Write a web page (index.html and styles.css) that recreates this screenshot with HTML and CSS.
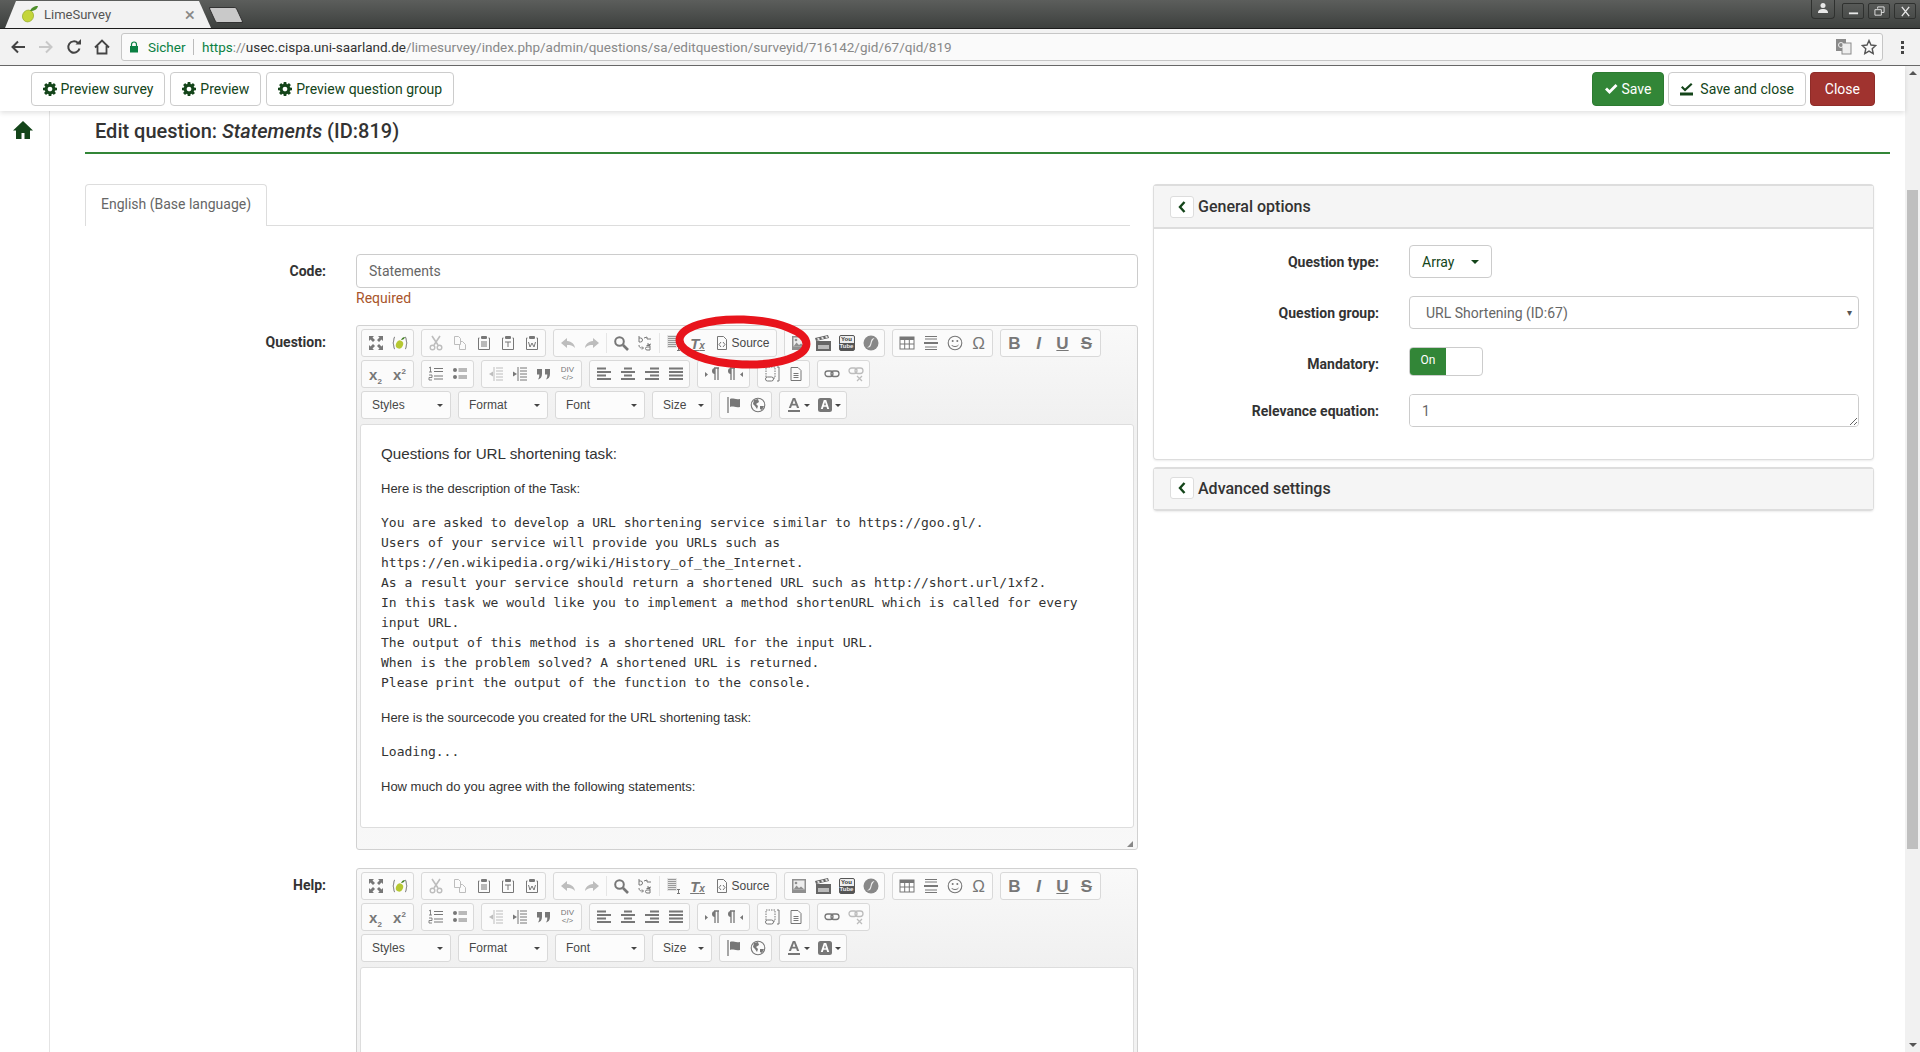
FILE: index.html
```html
<!DOCTYPE html>
<html lang="en">

<head>
    <meta charset="UTF-8">
    <title>LimeSurvey</title>
    <link rel="stylesheet" href="styles.css">
</head>

<body>
    <svg class="sprites" xmlns="http://www.w3.org/2000/svg">
        <symbol id="i-cog" viewBox="0 0 1536 1536"><path d="M1024 768q0-106-75-181t-181-75-181 75-75 181 75 181 181 75 181-75 75-181zm512-109v222q0 12-8 23t-20 13l-185 28q-19 54-39 91 35 50 107 138 10 12 10 25t-9 23q-27 37-99 108t-94 71q-12 0-26-9l-138-108q-44 23-91 38-16 136-29 186-7 28-36 28h-222q-14 0-24.500-8.500t-11.500-21.500l-28-184q-49-16-90-37l-141 107q-10 9-25 9-14 0-25-11-126-114-165-168-7-10-7-23 0-12 8-23 15-21 51-66.500t54-70.500q-27-50-41-99l-183-27q-13-2-21-12.500t-8-23.500v-222q0-12 8-23t19-13l186-28q14-46 39-92-40-57-107-138-10-12-10-24 0-10 9-23 26-36 98.500-107.500t94.500-71.500q13 0 26 10l138 107q44-23 91-38 16-136 29-186 7-28 36-28h222q14 0 24.500 8.500t11.500 21.500l28 184q49 16 90 37l142-107q9-9 24-9 13 0 25 10 129 119 165 170 7 8 7 22 0 12-8 23-15 21-51 66.500t-54 70.500q26 50 41 98l183 28q13 2 21 12.500t8 23.500z"/></symbol>
        <symbol id="i-lime" viewBox="0 0 16 16"><path d="M3 2C1.500 2 2 7 1 8c1 1 .5 6 2 6" fill="none" stroke="#666" stroke-width="1"/><path d="M13 2c1.500 0 1 5 2 6-1 1-.5 6-2 6" fill="none" stroke="#666" stroke-width="1"/><ellipse cx="7.500" cy="9.500" rx="3.500" ry="4.200" fill="#b6c832" transform="rotate(25 7.500 9.500)"/><path d="M9 5c1-2 2-3 4-3-.5 2-2 3-4 3z" fill="#3f7d1f"/></symbol>
        <symbol id="i-maximize" viewBox="0 0 16 16"><path d="M1 1h5L4.500 2.500 7 5 5 7 2.500 4.500 1 6zM15 1v5l-1.500-1.500L11 7 9 5l2.500-2.500L10 1zM1 15v-5l1.500 1.500L5 9l2 2-2.500 2.500L6 15zM15 15h-5l1.500-1.500L9 11l2-2 2.500 2.500L15 10z"/></symbol>
        <symbol id="i-cut" viewBox="0 0 16 16"><path d="M4 1l6 9M12 1l-6 9" fill="none" stroke="currentColor" stroke-width="1.600"/><circle cx="4.500" cy="12.500" r="2.300" fill="none" stroke="currentColor" stroke-width="1.400"/><circle cx="11.500" cy="12.500" r="2.300" fill="none" stroke="currentColor" stroke-width="1.400"/></symbol>
        <symbol id="i-copy" viewBox="0 0 16 16"><path d="M2.500 1.500h4l2 2v6h-6zM8.500 6.500h2l3 3v5h-6v-5" fill="none" stroke="currentColor"/></symbol>
        <symbol id="i-paste" viewBox="0 0 16 16"><path d="M3.500 3H2.500v11.500h11V3h-1" fill="none" stroke="currentColor"/><rect x="5" y="1" width="6" height="3" rx="1"/><path d="M5 7h6M5 9h6M5 11h6" stroke="currentColor"/></symbol>
        <symbol id="i-pastetext" viewBox="0 0 16 16"><path d="M3.500 3H2.500v11.500h11V3h-1" fill="none" stroke="currentColor"/><rect x="5" y="1" width="6" height="3" rx="1"/><path d="M5 7h6M8 7v5" stroke="currentColor"/></symbol>
        <symbol id="i-pasteword" viewBox="0 0 16 16"><path d="M3.500 3H2.500v11.500h11V3h-1" fill="none" stroke="currentColor"/><rect x="5" y="1" width="6" height="3" rx="1"/><path d="M4.500 7l1.500 5 2-4 2 4 1.500-5" fill="none" stroke="currentColor"/></symbol>
        <symbol id="i-undo" viewBox="0 0 16 16"><path d="M7 3L1 8l6 5v-3c3 0 6 .5 8 3-.5-4-3-6.500-8-7z"/></symbol>
        <symbol id="i-redo" viewBox="0 0 16 16"><path d="M9 3l6 5-6 5v-3c-3 0-6 .5-8 3 .5-4 3-6.500 8-7z"/></symbol>
        <symbol id="i-find" viewBox="0 0 16 16"><circle cx="6.500" cy="6.500" r="4.300" fill="none" stroke="currentColor" stroke-width="2"/><path d="M10 10l5 5" stroke="currentColor" stroke-width="2.600"/></symbol>
        <symbol id="i-replace" viewBox="0 0 16 16"><path d="M2 1v6h1.500a2 2 0 0 0 0-4H2M7 3l3-1v2l4 0M14 9l-3 1V8" fill="none" stroke="currentColor"/><path d="M2 10c0 3 2 3 4 3M5 11.500L6.500 13 5 14.500" fill="none" stroke="currentColor"/><path d="M9.500 10.500h3.500v4.500h-3a1.500 1.500 0 0 1 0-3h3" fill="none" stroke="currentColor"/></symbol>
        <symbol id="i-selectall" viewBox="0 0 16 16"><rect x="1" y="0" width="10" height="13" fill="#e4e4e4"/><path d="M2 1.500h8M2 3.500h8M2 5.500h8M2 7.500h8M2 9.500h8M2 11.500h8" stroke="#9a9a9a"/><path d="M12.500 11v5M11 11.500h3M11 15.500h3" stroke="#777"/></symbol>
        <symbol id="i-source" viewBox="0 0 16 16"><path d="M3.500 1.500h6l3 3v10h-9z" fill="none" stroke="currentColor"/><path d="M7 7L5 9.500 7 12M9 7l2 2.500L9 12" fill="none" stroke="currentColor"/></symbol>
        <symbol id="i-image" viewBox="0 0 16 16"><rect x="1" y="1" width="14" height="14" fill="#8f8f8f"/><rect x="2.500" y="2.500" width="11" height="9" fill="#ededed"/><path d="M2.500 11.500l3-4 2.500 2.500 2-1.500 3.500 3z" fill="#8f8f8f"/><circle cx="5" cy="5" r="1.300" fill="#8f8f8f"/></symbol>
        <symbol id="i-video" viewBox="0 0 16 16"><path d="M1 6h15v10H1z" fill="#666"/><path d="M0 3l13-3 1 3L1 6z" fill="#666"/><path d="M2 3.500l2-.5 1 1.500-2 .5zM6 2.500l2-.5 1 1.500-2 .5zM10 1.500l2-.5 1 1.500-2 .5z" fill="#eee"/><path d="M3 10h11v4H3z" fill="#bbb"/></symbol>
        <symbol id="i-flash" viewBox="0 0 16 16"><circle cx="8" cy="8" r="7.500" fill="#888"/><path d="M11.500 3C8 3.500 8 6 7.500 8S6 12 4 12.500c3 .5 4-1.500 4.500-4S10 4.500 11.500 3z" fill="#eee"/></symbol>
        <symbol id="i-table" viewBox="0 0 16 16"><rect x="1" y="2" width="14" height="12" fill="#fff" stroke="#777"/><rect x="1" y="2" width="14" height="3" fill="#777"/><path d="M1 9h14M5.700 5v9M10.300 5v9" stroke="#777"/></symbol>
        <symbol id="i-hr" viewBox="0 0 16 16"><path d="M2 1.500h12M2 4h12M2 12h12M2 14.500h12" stroke="currentColor"/><path d="M1 8h14" stroke="currentColor" stroke-width="2"/></symbol>
        <symbol id="i-smiley" viewBox="0 0 16 16"><circle cx="8" cy="8" r="6.800" fill="none" stroke="currentColor" stroke-width="1.100"/><circle cx="5.700" cy="6" r="1"/><circle cx="10.300" cy="6" r="1"/><path d="M4.500 10c1.500 2 5.500 2 7 0" fill="none" stroke="currentColor"/></symbol>
        <symbol id="i-numlist" viewBox="0 0 16 16"><path d="M1 2l1.500-1v5M1 6h3M1 9h3v2.500H1V14h3" fill="none" stroke="currentColor" stroke-width=".9"/><path d="M6 2.500h9M6 5.500h9M6 10h9M6 13h9" stroke="currentColor"/></symbol>
        <symbol id="i-bullist" viewBox="0 0 16 16"><circle cx="3" cy="4" r="2"/><circle cx="3" cy="11" r="2"/><path d="M6.500 3h8.500M6.500 5h8.500M6.500 10h8.500M6.500 12h8.500" stroke="currentColor"/></symbol>
        <symbol id="i-outdent" viewBox="0 0 16 16"><path d="M8 2h7M8 5h7M8 8h7M8 11h7M8 14h7M6 1v14" stroke="currentColor" stroke-dasharray="none"/><path d="M5 5.500L1 8l4 2.500z"/></symbol>
        <symbol id="i-indent" viewBox="0 0 16 16"><path d="M8 2h7M8 5h7M8 8h7M8 11h7M8 14h7M6 1v14" stroke="currentColor"/><path d="M1 5.500L5 8l-4 2.500z"/></symbol>
        <symbol id="i-quote" viewBox="0 0 16 16"><path d="M1 3h5v5c0 3-1.500 5-4 5.500.8-1.500 1.300-2.500 1.300-5H1zM9 3h5v5c0 3-1.500 5-4 5.500.8-1.500 1.300-2.500 1.300-5H9z"/></symbol>
        <symbol id="i-alignl" viewBox="0 0 16 16"><path d="M1 2.500h9M1 6h14M1 9.500h9M1 13h14" stroke="currentColor" stroke-width="2"/></symbol>
        <symbol id="i-alignc" viewBox="0 0 16 16"><path d="M4 2.500h8M1 6h14M4 9.500h8M1 13h14" stroke="currentColor" stroke-width="2"/></symbol>
        <symbol id="i-alignr" viewBox="0 0 16 16"><path d="M6 2.500h9M1 6h14M6 9.500h9M1 13h14" stroke="currentColor" stroke-width="2"/></symbol>
        <symbol id="i-alignj" viewBox="0 0 16 16"><path d="M1 2.500h14M1 6h14M1 9.500h14M1 13h14" stroke="currentColor" stroke-width="2"/></symbol>
        <symbol id="i-ltr" viewBox="0 0 16 16"><path d="M1 6l3 2.500L1 11z"/><path d="M10 2h5M11 2v12M14 2v12" stroke="currentColor" stroke-width="1.300" fill="none"/><path d="M11 2a3 3 0 0 0 0 6z"/></symbol>
        <symbol id="i-rtl" viewBox="0 0 16 16"><path d="M15 6l-3 2.500 3 2.500z"/><path d="M2 2h5M3 2v12M6 2v12" stroke="currentColor" stroke-width="1.300" fill="none"/><path d="M3 2a3 3 0 0 0 0 6z"/></symbol>
        <symbol id="i-iframe" viewBox="0 0 16 16"><path d="M2 1h9v11H2z" fill="none" stroke="currentColor" stroke-dasharray="1.500 1"/><rect x="1.500" y="11" width="8" height="4" rx="2" fill="#fff" stroke="currentColor"/><path d="M13 1h2v14h-2" fill="none" stroke="currentColor"/></symbol>
        <symbol id="i-page" viewBox="0 0 16 16"><path d="M3 1.500h7l3 3v10H3z" fill="none" stroke="currentColor"/><path d="M5.500 7.500h5M5.500 9.500h5M5.500 11.500h5" stroke="currentColor"/></symbol>
        <symbol id="i-link" viewBox="0 0 16 16"><rect x="1" y="5" width="8" height="5.500" rx="2.700" fill="none" stroke="currentColor" stroke-width="1.300"/><rect x="7" y="5" width="8" height="5.500" rx="2.700" fill="none" stroke="currentColor" stroke-width="1.300"/></symbol>
        <symbol id="i-unlink" viewBox="0 0 16 16"><rect x="1" y="2" width="8" height="5.500" rx="2.700" fill="none" stroke="currentColor" stroke-width="1.300"/><rect x="7" y="2" width="8" height="5.500" rx="2.700" fill="none" stroke="currentColor" stroke-width="1.300"/><path d="M9 10l5 5M14 10l-5 5" stroke="currentColor" stroke-width="1.300"/></symbol>
        <symbol id="i-flag" viewBox="0 0 16 16"><path d="M2 0v16" stroke="currentColor" stroke-width="1.300"/><path d="M4 2c3-1.500 5 1 10 0v8c-5 1-7-1.500-10 0z"/></symbol>
        <symbol id="i-globe" viewBox="0 0 16 16"><circle cx="8" cy="8" r="6.800" fill="none" stroke="currentColor" stroke-width="1.100"/><path d="M4 3l4-1 1 3-3 2 2 2-1 3-2-3-2-2zM10 9h4l-2 4-2-1z"/></symbol>
        <symbol id="i-tcolor" viewBox="0 0 16 16"><path d="M6.800 1h2.400l4 10h-2.200l-.9-2.500H5.900L5 11H2.800zM6.600 6.800h2.800L8 3z" fill-rule="evenodd"/><path d="M2 14h12" stroke="currentColor" stroke-width="2"/></symbol>
        <symbol id="i-bcolor" viewBox="0 0 16 16"><rect x="1" y="1" width="14" height="14" rx="2.500"/><path d="M6.800 3h2.400l3 9h-2l-.7-2.200H6.500L5.800 12h-2zM7 8.200h2L8 5z" fill="#fff" fill-rule="evenodd"/></symbol>
    </svg>

    <div class="tabstrip">
        <div class="tab">
            <svg class="favicon" viewBox="0 0 18 18"><ellipse cx="7" cy="11" rx="5.500" ry="6" fill="#c4d53a" stroke="#8fa62a" stroke-width=".6" transform="rotate(25 7 11)"/><path d="M9 6c1-3 4-5 8-5-.5 3-3.500 5-8 5z" fill="#4f8f2b"/></svg>
            <span class="tab-title">LimeSurvey</span>
            <span class="tab-close">&#215;</span>
        </div>
        <div class="newtab"></div>
        <div class="win-controls">
            <div class="win-user"><svg viewBox="0 0 12 12"><circle cx="6" cy="3.500" r="2.500" fill="#e8e8e8"/><path d="M1 11c0-3 2-4 5-4s5 1 5 4z" fill="#e8e8e8"/></svg></div>
            <div class="win-btn"><svg viewBox="0 0 12 12"><path d="M1 8h10" stroke="#e8e8e8" stroke-width="2"/></svg></div>
            <div class="win-btn"><svg viewBox="0 0 12 12"><path d="M4 3V1h7v6H8M1 4h7v6H1z" fill="none" stroke="#e8e8e8"/></svg></div>
            <div class="win-btn"><svg viewBox="0 0 12 12"><path d="M2 1l8 10M10 1L2 11" stroke="#e8e8e8" stroke-width="1.500"/></svg></div>
        </div>
    </div>

    <div class="addressbar">
        <svg class="nav-ico" viewBox="0 0 16 16"><path d="M15 8H3M8 2.500L2.500 8 8 13.500" fill="none" stroke="#444" stroke-width="2"/></svg>
        <svg class="nav-ico" viewBox="0 0 16 16"><path d="M1 8h12M8 2.500L13.500 8 8 13.500" fill="none" stroke="#c8c8c8" stroke-width="2"/></svg>
        <svg class="nav-ico" viewBox="0 0 16 16"><path d="M13.500 9.500A5.700 5.700 0 1 1 12 4" fill="none" stroke="#444" stroke-width="2"/><path d="M9.500 5.500H15V0z" fill="#444"/></svg>
        <svg class="nav-ico" viewBox="0 0 16 16"><path d="M1 8.500L8 1.500l7 7M3.500 7v7.500h9V7" fill="none" stroke="#444" stroke-width="1.800"/></svg>
        <div class="omnibox">
            <svg class="lock" viewBox="0 0 10 12"><path d="M2.500 5V3.500a2.500 2.500 0 0 1 5 0V5" fill="none" stroke="#0b8043" stroke-width="1.200"/><rect x="1" y="5" width="8" height="6.500" fill="#0b8043"/></svg>
            <span class="secure">Sicher</span>
            <span class="url"><span class="url-scheme">https</span><span class="url-dim">://</span><span class="url-host">usec.cispa.uni-saarland.de</span><span class="url-dim">/limesurvey/index.php/admin/questions/sa/editquestion/surveyid/716142/gid/67/qid/819</span></span>
            <svg class="omni-ico" viewBox="0 0 16 16"><rect x="0" y="0" width="10" height="12" fill="#8a8a8a"/><rect x="6" y="4" width="9" height="11" fill="#eee" stroke="#8a8a8a"/><circle cx="5" cy="6" r="2.500" fill="none" stroke="#eee"/></svg>
            <svg class="omni-ico star" viewBox="0 0 16 16"><path d="M8 1.500l2 4.500 4.800.5-3.600 3.200 1 4.800L8 12.100l-4.200 2.400 1-4.800L1.200 6.500 6 6z" fill="none" stroke="#555" stroke-width="1.400"/></svg>
        </div>
        <div class="chrome-menu"><i></i><i></i><i></i></div>
    </div>

    <div class="page">
        <div class="page-main">
            <div class="topbar">
                <a class="btn"><svg class="btn-ico"><use href="#i-cog"/></svg>Preview survey</a>
                <a class="btn"><svg class="btn-ico"><use href="#i-cog"/></svg>Preview</a>
                <a class="btn"><svg class="btn-ico"><use href="#i-cog"/></svg>Preview question group</a>
                <span class="topbar-space"></span>
                <a class="btn btn-save"><svg class="btn-ico" viewBox="0 0 14 14"><path d="M1 7.500l2-2 2.500 2.500L11.500 2l2 2-8 8z" fill="currentColor"/></svg>Save</a>
                <a class="btn btn-saveclose"><svg class="btn-ico" viewBox="0 0 14 14"><path d="M1 5.500l1.500-1.500 2.500 2.500L11 1l1.500 1.500L5 9.500z" fill="currentColor"/><rect x="0" y="10.500" width="13" height="3" fill="currentColor"/></svg>Save and close</a>
                <a class="btn btn-close">Close</a>
            </div>

            <div class="workspace">
                <aside class="sidebar">
                    <svg class="home" viewBox="0 0 20 20"><path d="M10 1L0 10.500h3V19h5.500v-6h3v6H17v-8.500h3z"/></svg>
                </aside>

                <main class="content">
                    <h1 class="page-title">Edit question: <em>Statements</em> (ID:819)</h1>

                    <div class="columns">
                        <section class="col-left">
                            <div class="lang-tabs"><span class="lang-tab">English (Base language)</span></div>

                            <div class="form-row code-row">
                                <label class="form-label">Code:</label>
                                <div>
                                    <input class="text-input" type="text" value="Statements">
                                    <div class="required">Required</div>
                                </div>
                            </div>

                            <div class="form-row">
                                <label class="form-label editor-label">Question:</label>
                                <div class="editor question-editor">
                                    <div class="cke-toolbar">
                                        <div class="cke-row">
                                            <div class="cke-group">
                                                <a class="cke-btn"><svg><use href="#i-maximize"/></svg></a>
                                                <a class="cke-btn"><svg><use href="#i-lime"/></svg></a>
                                            </div>
                                            <div class="cke-group">
                                                <a class="cke-btn off"><svg><use href="#i-cut"/></svg></a>
                                                <a class="cke-btn off"><svg><use href="#i-copy"/></svg></a>
                                                <a class="cke-btn"><svg><use href="#i-paste"/></svg></a>
                                                <a class="cke-btn"><svg><use href="#i-pastetext"/></svg></a>
                                                <a class="cke-btn"><svg><use href="#i-pasteword"/></svg></a>
                                            </div>
                                            <div class="cke-group">
                                                <a class="cke-btn off"><svg><use href="#i-undo"/></svg></a>
                                                <a class="cke-btn off"><svg><use href="#i-redo"/></svg></a>
                                                <span class="cke-sep"></span>
                                                <a class="cke-btn"><svg><use href="#i-find"/></svg></a>
                                                <a class="cke-btn"><svg><use href="#i-replace"/></svg></a>
                                                <span class="cke-sep"></span>
                                                <a class="cke-btn"><svg><use href="#i-selectall"/></svg></a>
                                                <a class="cke-btn"><span class="glyph-tx">T<small>x</small></span></a>
                                                <a class="cke-btn cke-source"><svg><use href="#i-source"/></svg>Source</a>
                                            </div>
                                            <div class="cke-group">
                                                <a class="cke-btn"><svg><use href="#i-image"/></svg></a>
                                                <a class="cke-btn"><svg><use href="#i-video"/></svg></a>
                                                <a class="cke-btn"><span class="glyph-yt">You<b>Tube</b></span></a>
                                                <a class="cke-btn"><svg><use href="#i-flash"/></svg></a>
                                            </div>
                                            <div class="cke-group">
                                                <a class="cke-btn"><svg><use href="#i-table"/></svg></a>
                                                <a class="cke-btn"><svg><use href="#i-hr"/></svg></a>
                                                <a class="cke-btn"><svg><use href="#i-smiley"/></svg></a>
                                                <a class="cke-btn"><span class="glyph-letter">&#937;</span></a>
                                            </div>
                                            <div class="cke-group">
                                                <a class="cke-btn"><b class="glyph-letter">B</b></a>
                                                <a class="cke-btn"><b class="glyph-letter glyph-i">I</b></a>
                                                <a class="cke-btn"><b class="glyph-letter glyph-u">U</b></a>
                                                <a class="cke-btn"><b class="glyph-letter glyph-s">S</b></a>
                                            </div>
                                        </div>
                                        <div class="cke-row">
                                            <div class="cke-group">
                                                <a class="cke-btn"><b class="glyph-sub">x<sub>2</sub></b></a>
                                                <a class="cke-btn"><b class="glyph-sub">x<sup>2</sup></b></a>
                                            </div>
                                            <div class="cke-group">
                                                <a class="cke-btn"><svg><use href="#i-numlist"/></svg></a>
                                                <a class="cke-btn"><svg><use href="#i-bullist"/></svg></a>
                                            </div>
                                            <div class="cke-group">
                                                <a class="cke-btn off"><svg><use href="#i-outdent"/></svg></a>
                                                <a class="cke-btn"><svg><use href="#i-indent"/></svg></a>
                                                <a class="cke-btn"><svg><use href="#i-quote"/></svg></a>
                                                <a class="cke-btn"><span class="glyph-div">DIV<br>&lt;/&gt;</span></a>
                                            </div>
                                            <div class="cke-group">
                                                <a class="cke-btn"><svg><use href="#i-alignl"/></svg></a>
                                                <a class="cke-btn"><svg><use href="#i-alignc"/></svg></a>
                                                <a class="cke-btn"><svg><use href="#i-alignr"/></svg></a>
                                                <a class="cke-btn"><svg><use href="#i-alignj"/></svg></a>
                                            </div>
                                            <div class="cke-group">
                                                <a class="cke-btn"><svg><use href="#i-ltr"/></svg></a>
                                                <a class="cke-btn"><svg><use href="#i-rtl"/></svg></a>
                                            </div>
                                            <div class="cke-group">
                                                <a class="cke-btn"><svg><use href="#i-iframe"/></svg></a>
                                                <a class="cke-btn"><svg><use href="#i-page"/></svg></a>
                                            </div>
                                            <div class="cke-group">
                                                <a class="cke-btn"><svg><use href="#i-link"/></svg></a>
                                                <a class="cke-btn off"><svg><use href="#i-unlink"/></svg></a>
                                            </div>
                                        </div>
                                        <div class="cke-row">
                                            <div class="cke-combo">Styles<i class="caret"></i></div>
                                            <div class="cke-combo">Format<i class="caret"></i></div>
                                            <div class="cke-combo">Font<i class="caret"></i></div>
                                            <div class="cke-combo combo-small">Size<i class="caret"></i></div>
                                            <div class="cke-group">
                                                <a class="cke-btn"><svg><use href="#i-flag"/></svg></a>
                                                <a class="cke-btn"><svg><use href="#i-globe"/></svg></a>
                                            </div>
                                            <div class="cke-group">
                                                <a class="cke-btn cke-color"><svg><use href="#i-tcolor"/></svg><i class="caret"></i></a>
                                                <a class="cke-btn cke-color"><svg><use href="#i-bcolor"/></svg><i class="caret"></i></a>
                                            </div>
                                        </div>
                                    </div>
                                    <div class="cke-body">
                                        <p class="lead">Questions for URL shortening task:</p>
                                        <p>Here is the description of the Task:</p>
                                        <pre>You are asked to develop a URL shortening service similar to https://goo.gl/.
Users of your service will provide you URLs such as
https://en.wikipedia.org/wiki/History_of_the_Internet.
As a result your service should return a shortened URL such as http://short.url/1xf2.
In this task we would like you to implement a method shortenURL which is called for every
input URL.
The output of this method is a shortened URL for the input URL.
When is the problem solved? A shortened URL is returned.
Please print the output of the function to the console.</pre>
                                        <p>Here is the sourcecode you created for the URL shortening task:</p>
                                        <pre>Loading...</pre>
                                        <p>How much do you agree with the following statements:</p>
                                    </div>
                                    <div class="cke-footer"><i class="resizer"></i></div>
                                    <!-- red marker drawn over the screenshot -->
                                    <svg class="marker" viewBox="0 0 140 60"><ellipse cx="70" cy="30" rx="63.500" ry="22.500" fill="none" stroke="#e8141c" stroke-width="8" transform="rotate(2 70 30)"/></svg>
                                </div>
                            </div>

                            <div class="form-row help-row">
                                <label class="form-label editor-label">Help:</label>
                                <div class="editor">
                                    <div class="cke-toolbar">
                                        <div class="cke-row">
                                            <div class="cke-group">
                                                <a class="cke-btn"><svg><use href="#i-maximize"/></svg></a>
                                                <a class="cke-btn"><svg><use href="#i-lime"/></svg></a>
                                            </div>
                                            <div class="cke-group">
                                                <a class="cke-btn off"><svg><use href="#i-cut"/></svg></a>
                                                <a class="cke-btn off"><svg><use href="#i-copy"/></svg></a>
                                                <a class="cke-btn"><svg><use href="#i-paste"/></svg></a>
                                                <a class="cke-btn"><svg><use href="#i-pastetext"/></svg></a>
                                                <a class="cke-btn"><svg><use href="#i-pasteword"/></svg></a>
                                            </div>
                                            <div class="cke-group">
                                                <a class="cke-btn off"><svg><use href="#i-undo"/></svg></a>
                                                <a class="cke-btn off"><svg><use href="#i-redo"/></svg></a>
                                                <span class="cke-sep"></span>
                                                <a class="cke-btn"><svg><use href="#i-find"/></svg></a>
                                                <a class="cke-btn"><svg><use href="#i-replace"/></svg></a>
                                                <span class="cke-sep"></span>
                                                <a class="cke-btn"><svg><use href="#i-selectall"/></svg></a>
                                                <a class="cke-btn"><span class="glyph-tx">T<small>x</small></span></a>
                                                <a class="cke-btn cke-source"><svg><use href="#i-source"/></svg>Source</a>
                                            </div>
                                            <div class="cke-group">
                                                <a class="cke-btn"><svg><use href="#i-image"/></svg></a>
                                                <a class="cke-btn"><svg><use href="#i-video"/></svg></a>
                                                <a class="cke-btn"><span class="glyph-yt">You<b>Tube</b></span></a>
                                                <a class="cke-btn"><svg><use href="#i-flash"/></svg></a>
                                            </div>
                                            <div class="cke-group">
                                                <a class="cke-btn"><svg><use href="#i-table"/></svg></a>
                                                <a class="cke-btn"><svg><use href="#i-hr"/></svg></a>
                                                <a class="cke-btn"><svg><use href="#i-smiley"/></svg></a>
                                                <a class="cke-btn"><span class="glyph-letter">&#937;</span></a>
                                            </div>
                                            <div class="cke-group">
                                                <a class="cke-btn"><b class="glyph-letter">B</b></a>
                                                <a class="cke-btn"><b class="glyph-letter glyph-i">I</b></a>
                                                <a class="cke-btn"><b class="glyph-letter glyph-u">U</b></a>
                                                <a class="cke-btn"><b class="glyph-letter glyph-s">S</b></a>
                                            </div>
                                        </div>
                                        <div class="cke-row">
                                            <div class="cke-group">
                                                <a class="cke-btn"><b class="glyph-sub">x<sub>2</sub></b></a>
                                                <a class="cke-btn"><b class="glyph-sub">x<sup>2</sup></b></a>
                                            </div>
                                            <div class="cke-group">
                                                <a class="cke-btn"><svg><use href="#i-numlist"/></svg></a>
                                                <a class="cke-btn"><svg><use href="#i-bullist"/></svg></a>
                                            </div>
                                            <div class="cke-group">
                                                <a class="cke-btn off"><svg><use href="#i-outdent"/></svg></a>
                                                <a class="cke-btn"><svg><use href="#i-indent"/></svg></a>
                                                <a class="cke-btn"><svg><use href="#i-quote"/></svg></a>
                                                <a class="cke-btn"><span class="glyph-div">DIV<br>&lt;/&gt;</span></a>
                                            </div>
                                            <div class="cke-group">
                                                <a class="cke-btn"><svg><use href="#i-alignl"/></svg></a>
                                                <a class="cke-btn"><svg><use href="#i-alignc"/></svg></a>
                                                <a class="cke-btn"><svg><use href="#i-alignr"/></svg></a>
                                                <a class="cke-btn"><svg><use href="#i-alignj"/></svg></a>
                                            </div>
                                            <div class="cke-group">
                                                <a class="cke-btn"><svg><use href="#i-ltr"/></svg></a>
                                                <a class="cke-btn"><svg><use href="#i-rtl"/></svg></a>
                                            </div>
                                            <div class="cke-group">
                                                <a class="cke-btn"><svg><use href="#i-iframe"/></svg></a>
                                                <a class="cke-btn"><svg><use href="#i-page"/></svg></a>
                                            </div>
                                            <div class="cke-group">
                                                <a class="cke-btn"><svg><use href="#i-link"/></svg></a>
                                                <a class="cke-btn off"><svg><use href="#i-unlink"/></svg></a>
                                            </div>
                                        </div>
                                        <div class="cke-row">
                                            <div class="cke-combo">Styles<i class="caret"></i></div>
                                            <div class="cke-combo">Format<i class="caret"></i></div>
                                            <div class="cke-combo">Font<i class="caret"></i></div>
                                            <div class="cke-combo combo-small">Size<i class="caret"></i></div>
                                            <div class="cke-group">
                                                <a class="cke-btn"><svg><use href="#i-flag"/></svg></a>
                                                <a class="cke-btn"><svg><use href="#i-globe"/></svg></a>
                                            </div>
                                            <div class="cke-group">
                                                <a class="cke-btn cke-color"><svg><use href="#i-tcolor"/></svg><i class="caret"></i></a>
                                                <a class="cke-btn cke-color"><svg><use href="#i-bcolor"/></svg><i class="caret"></i></a>
                                            </div>
                                        </div>
                                    </div>
                                    <div class="cke-body help-body"></div>
                                </div>
                            </div>
                        </section>

                        <section class="col-right">
                            <div class="panel">
                                <div class="panel-head">
                                    <span class="collapse-btn"><svg viewBox="0 0 10 14"><path d="M7.500 2L3 7l4.500 5" fill="none" stroke="currentColor" stroke-width="2.400"/></svg></span>
                                    General options
                                </div>
                                <div class="panel-body">
                                    <div class="opt-row">
                                        <label class="form-label">Question type:</label>
                                        <div class="type-btn">Array<i class="caret"></i></div>
                                    </div>
                                    <div class="opt-row">
                                        <label class="form-label">Question group:</label>
                                        <div class="select-box">URL Shortening (ID:67)<span class="select-arrow">&#9662;</span></div>
                                    </div>
                                    <div class="opt-row">
                                        <label class="form-label">Mandatory:</label>
                                        <div class="switch"><span class="switch-on">On</span></div>
                                    </div>
                                    <div class="opt-row">
                                        <label class="form-label">Relevance equation:</label>
                                        <textarea class="relevance" rows="1">1</textarea>
                                    </div>
                                </div>
                            </div>
                            <div class="panel panel-closed">
                                <div class="panel-head">
                                    <span class="collapse-btn"><svg viewBox="0 0 10 14"><path d="M7.500 2L3 7l4.500 5" fill="none" stroke="currentColor" stroke-width="2.400"/></svg></span>
                                    Advanced settings
                                </div>
                            </div>
                        </section>
                    </div>
                </main>
            </div>
        </div>

        <div class="scrollbar">
            <i class="arrow-up"></i>
            <div class="scroll-track"><div class="scroll-thumb"></div></div>
            <i class="arrow-down"></i>
        </div>
    </div>
</body>

</html>
```

FILE: styles.css
```css
/* Global */
* {
    box-sizing: border-box;
}

html, body {
    margin: 0;
    height: 1052px;
    overflow: hidden;
}

body {
    font-family: Roboto, sans-serif;
    font-size: 14px;
    color: #333;
    background-color: #fff;
}

.sprites {
    display: none;
}

/* Browser window */
.tabstrip {
    display: flex;
    align-items: flex-start;
    height: 29px;
    background: linear-gradient(#5c5e5c, #3d403e);
    border-bottom: 1px solid #1c1c1c;
}

.tab {
    display: flex;
    align-items: center;
    width: 206px;
    height: 28px;
    margin-left: 5px;
    padding: 0 16px 0 16px;
    background-color: #f2f2f2;
    clip-path: polygon(0 100%, 11px 1px, 194px 1px, 206px 100%);
}

.favicon {
    width: 18px;
    height: 18px;
}

.tab-title {
    flex: 1;
    margin-left: 5px;
    font-size: 13px;
    color: #555;
}

.tab-close {
    font-size: 19px;
    color: #888;
}

.newtab {
    width: 28px;
    height: 16px;
    margin: 7px 0 0 1px;
    background-color: #c9c9c9;
    border: 1px solid #333;
    border-radius: 2px;
    transform: skewX(25deg);
}

.win-controls {
    display: flex;
    gap: 4px;
    margin-left: auto;
    padding-right: 4px;
}

.win-user {
    display: flex;
    justify-content: center;
    width: 24px;
    height: 19px;
    margin-right: 3px;
    padding-top: 2px;
    border: 1px solid #2f312f;
    border-top: 0;
    border-radius: 0 0 4px 4px;
}

.win-user svg {
    width: 12px;
    height: 12px;
}

.win-btn {
    display: flex;
    align-items: center;
    justify-content: center;
    width: 22px;
    height: 16px;
    margin-top: 3px;
    border: 1px solid #2f312f;
    border-radius: 2px;
}

.win-btn svg {
    width: 11px;
    height: 11px;
}

.addressbar {
    display: flex;
    align-items: center;
    height: 37px;
    padding-left: 10px;
    background-color: #f2f2f2;
    border-bottom: 1px solid #6a6a6a;
}

.nav-ico {
    width: 16px;
    height: 16px;
    margin-right: 12px;
}

.omnibox {
    display: flex;
    align-items: center;
    width: 1762px;
    height: 28px;
    margin-left: -1px;
    padding-left: 7px;
    background-color: #fafafa;
    border: 1px solid #c6c6c6;
    border-radius: 3px;
    font-size: 13.5px;
}

.lock {
    width: 10px;
    height: 12px;
    margin-right: 9px;
}

.secure {
    width: 46px;
    margin-right: 8px;
    border-right: 1px solid #bbb;
    color: #0b8043;
}

.url {
    flex: 1;
}

.url-scheme {
    color: #0b8043;
}

.url-host {
    color: #333;
}

.url-dim {
    color: #888;
}

.omni-ico {
    width: 16px;
    height: 16px;
    margin-right: 9px;
}

.star {
    margin-right: 5px;
}

.chrome-menu {
    display: flex;
    flex-direction: column;
    gap: 2px;
    margin-left: 18px;
}

.chrome-menu i {
    width: 3px;
    height: 3px;
    background-color: #444;
}

/* Page */
.page {
    display: flex;
    height: 986px;
}

.page-main {
    flex: 1;
    min-width: 0;
}

.scrollbar {
    display: flex;
    flex-direction: column;
    align-items: center;
    width: 15px;
    background-color: #f1f1f1;
}

.arrow-up, .arrow-down {
    width: 0;
    height: 0;
    margin: 5px 0;
    border-left: 4px solid transparent;
    border-right: 4px solid transparent;
}

.arrow-up {
    border-bottom: 4px solid #555;
}

.arrow-down {
    border-top: 4px solid #555;
}

.scroll-track {
    flex: 1;
    width: 100%;
    padding: 110px 2px 0;
}

.scroll-thumb {
    height: 659px;
    background-color: #bfbfbf;
}

/* Top buttons */
.topbar {
    position: relative;
    z-index: 1;
    display: flex;
    align-items: center;
    gap: 5px;
    height: 45px;
    padding: 0 30px 0 30.5px;
    background-color: #fff;
    box-shadow: 0 2px 5px rgba(0, 0, 0, 0.12);
}

.topbar-space {
    flex: 1;
}

.btn {
    display: flex;
    align-items: center;
    height: 34px;
    padding: 0 11px;
    background-color: #fff;
    border: 1px solid #ccc;
    border-radius: 4px;
    color: #14451a;
}

.btn-ico {
    width: 14px;
    height: 14px;
    margin-right: 4px;
    fill: currentColor;
}

.btn-save {
    margin-right: -1px;
    padding: 0 12px 0 11px;
    background-color: #328637;
    border-color: #2c7a31;
    color: #fff;
}

.btn-save .btn-ico {
    margin-right: 3px;
}

.btn-saveclose {
    margin-right: -1px;
}

.btn-saveclose .btn-ico {
    margin-right: 6px;
}

.btn-close {
    padding: 0 14px;
    background-color: #a0332f;
    border-color: #8f2c28;
    color: #fff;
}

/* Layout below the bar */
.workspace {
    display: flex;
    height: 941px;
    overflow: hidden;
}

.sidebar {
    flex: none;
    width: 50px;
    padding: 9px 0 0 13px;
    border-right: 1px solid #e4e4e4;
}

.home {
    width: 20px;
    height: 20px;
    fill: #14451a;
}

.content {
    flex: 1;
    min-width: 0;
    padding: 0 15px 0 35px;
}

.page-title {
    height: 43px;
    margin: 0;
    padding: 8px 0 0 10px;
    border-bottom: 2px solid #328637;
    font-size: 20px;
    font-weight: 500;
    line-height: 24px;
}

.columns {
    display: flex;
    gap: 15px;
    margin-top: 30px;
}

.col-left {
    flex: none;
    width: 1053px;
}

.col-right {
    flex: none;
    width: 721px;
}

/* Language tab */
.lang-tabs {
    display: flex;
    width: 1045px;
    height: 42px;
    border-bottom: 1px solid #ddd;
}

.lang-tab {
    width: 182px;
    height: 42px;
    padding-top: 11px;
    background-color: #fff;
    border: 1px solid #ddd;
    border-bottom: 0;
    border-radius: 4px 4px 0 0;
    text-align: center;
    color: #666;
}

/* Form */
.form-row {
    display: grid;
    grid-template-columns: 241px 1fr;
    column-gap: 30px;
    margin-top: 17px;
}

.code-row {
    margin-top: 28px;
}

.help-row {
    margin-top: 18px;
}

.form-label {
    padding-top: 7px;
    text-align: right;
    font-weight: 700;
    line-height: 20px;
}

.editor-label {
    padding-top: 7px;
}

.text-input {
    display: block;
    width: 100%;
    height: 34px;
    padding: 0 12px;
    border: 1px solid #ccc;
    border-radius: 4px;
    font: 14px Roboto, sans-serif;
    color: #666;
}

.required {
    line-height: 20px;
    color: #a9552a;
}

/* Editor */
.editor {
    position: relative;
    padding: 0 3px;
    background: linear-gradient(#f8f8f8, #f1f1f1 100px, #f8f8f8 540px);
    border: 1px solid #d1d1d1;
    border-radius: 3px;
}

.cke-toolbar {
    display: flex;
    flex-direction: column;
    gap: 3px;
    padding: 3px 0 5px 1px;
    background: linear-gradient(#f9f9f9, #f0f0f0);
}

.cke-row {
    display: flex;
    gap: 7px;
    height: 28px;
}

.cke-group {
    display: flex;
    align-items: center;
    height: 28px;
    padding: 0 1.5px;
    background-color: #fbfbfb;
    border: 1px solid #d9d9d9;
    border-radius: 3px;
}

.cke-btn {
    display: flex;
    align-items: center;
    justify-content: center;
    width: 24px;
    height: 26px;
    color: #777;
    font-family: "Liberation Sans", Arial, sans-serif;
}

.cke-btn svg {
    width: 16px;
    height: 16px;
    fill: currentColor;
}

.cke-btn.off {
    color: #bdbdbd;
}

.cke-sep {
    width: 1px;
    height: 20px;
    margin: 0 2px;
    background-color: #e6e6e6;
}

.cke-source {
    justify-content: flex-start;
    gap: 2px;
    width: 65px;
    padding-left: 4px;
    font-size: 12px;
    color: #484848;
}

.cke-source svg {
    color: #777;
}

.cke-color {
    justify-content: flex-start;
    gap: 2px;
    width: 31.5px;
    padding-left: 4px;
}

.caret {
    display: inline-block;
    width: 0;
    height: 0;
    border-left: 3px solid transparent;
    border-right: 3px solid transparent;
    border-top: 3px solid #444;
}

.cke-combo {
    display: flex;
    align-items: center;
    justify-content: space-between;
    width: 90px;
    height: 28px;
    padding: 0 7px 0 10px;
    background-color: #fcfcfc;
    border: 1px solid #d9d9d9;
    border-radius: 3px;
    font: 12px "Liberation Sans", Arial, sans-serif;
    color: #484848;
}

.combo-small {
    width: 60px;
}

/* Letter style toolbar icons */
.glyph-letter {
    font-size: 17px;
    line-height: 1;
}

.glyph-i {
    font-style: italic;
}

.glyph-u {
    text-decoration: underline;
}

.glyph-s {
    text-decoration: line-through;
}

.glyph-sub {
    font-size: 15px;
    line-height: 1;
}

.glyph-sub sub, .glyph-sub sup {
    font-size: 8px;
    line-height: 0;
}

.glyph-tx {
    font-size: 15px;
    font-weight: 700;
    font-style: italic;
    text-decoration: underline;
}

.glyph-tx small {
    font-size: 10px;
}

.glyph-yt {
    display: flex;
    flex-direction: column;
    align-items: center;
    width: 16px;
    height: 16px;
    background-color: #eee;
    border: 1px solid #555;
    border-radius: 2px;
    font-size: 6px;
    font-weight: 700;
    line-height: 7px;
    color: #333;
}

.glyph-yt b {
    width: 100%;
    background-color: #555;
    text-align: center;
    color: #eee;
}

.glyph-div {
    font-size: 8px;
    font-weight: 400;
    line-height: 8px;
    text-align: center;
}

/* Editor text */
.cke-body {
    height: 404px;
    padding: 19px 20px 0;
    background-color: #fff;
    border: 1px solid #ddd;
    border-radius: 3px;
    font-family: "Liberation Sans", Arial, sans-serif;
    font-size: 13px;
    line-height: 20px;
    color: #333;
}

.help-body {
    height: 120px;
}

.cke-body p {
    margin: 0 0 14.5px;
}

.cke-body .lead {
    font-size: 15.21px;
}

.cke-body pre {
    margin: 0 0 14.5px;
    font-family: "DejaVu Sans Mono", monospace;
    font-size: 13px;
    line-height: 20px;
}

.cke-footer {
    position: relative;
    height: 21px;
}

.resizer {
    position: absolute;
    right: 1px;
    bottom: 2px;
    width: 0;
    height: 0;
    border-left: 6px solid transparent;
    border-bottom: 6px solid #888;
}

.marker {
    position: absolute;
    top: -14.5px;
    left: 315.5px;
    width: 140px;
    height: 60px;
}

/* Right side panels */
.panel {
    margin-bottom: 7px;
    border: 1px solid #ddd;
    border-top-width: 2px;
    border-radius: 4px;
    box-shadow: 0 1px 2px rgba(0, 0, 0, 0.08);
}

.panel-head {
    display: flex;
    align-items: center;
    height: 43px;
    padding-left: 16px;
    background-color: #f5f5f5;
    border-bottom: 2px solid #ddd;
    font-size: 16px;
    font-weight: 500;
}

.panel-closed .panel-head {
    height: 41px;
    padding-bottom: 2px;
    border-bottom: 1px solid #ddd;
}

.collapse-btn {
    display: flex;
    align-items: center;
    justify-content: center;
    width: 24px;
    height: 22px;
    margin-right: 4px;
    background-color: #fff;
    border: 1px solid #ddd;
    border-radius: 3px;
    color: #14451a;
}

.collapse-btn svg {
    width: 10px;
    height: 14px;
}

.panel-body {
    display: flex;
    flex-direction: column;
    gap: 18px;
    height: 230px;
    padding: 16px 14px 0 0;
}

.opt-row {
    display: grid;
    grid-template-columns: 225px 1fr;
    column-gap: 30px;
}

.type-btn {
    display: flex;
    align-items: center;
    justify-content: space-between;
    width: 83px;
    height: 33px;
    padding: 0 12px;
    border: 1px solid #ccc;
    border-radius: 4px;
    color: #14451a;
}

.type-btn .caret {
    border-left-width: 4px;
    border-right-width: 4px;
    border-top: 4px solid #14451a;
}

.select-box {
    display: flex;
    align-items: center;
    justify-content: space-between;
    height: 33px;
    padding: 0 6px 0 16px;
    border: 1px solid #ccc;
    border-radius: 4px;
    color: #666;
}

.select-arrow {
    font-size: 10px;
    color: #555;
}

.switch {
    width: 74px;
    height: 29px;
    border: 1px solid #ccc;
    border-radius: 4px;
    overflow: hidden;
}

.switch-on {
    display: block;
    width: 36px;
    height: 100%;
    padding-top: 5px;
    background-color: #328637;
    text-align: center;
    font-size: 12px;
    color: #fff;
}

.relevance {
    display: block;
    width: 100%;
    height: 33px;
    padding: 6px 12px;
    border: 1px solid #ccc;
    border-radius: 4px;
    font: 14px/20px Roboto, sans-serif;
    color: #666;
    resize: vertical;
}
```
